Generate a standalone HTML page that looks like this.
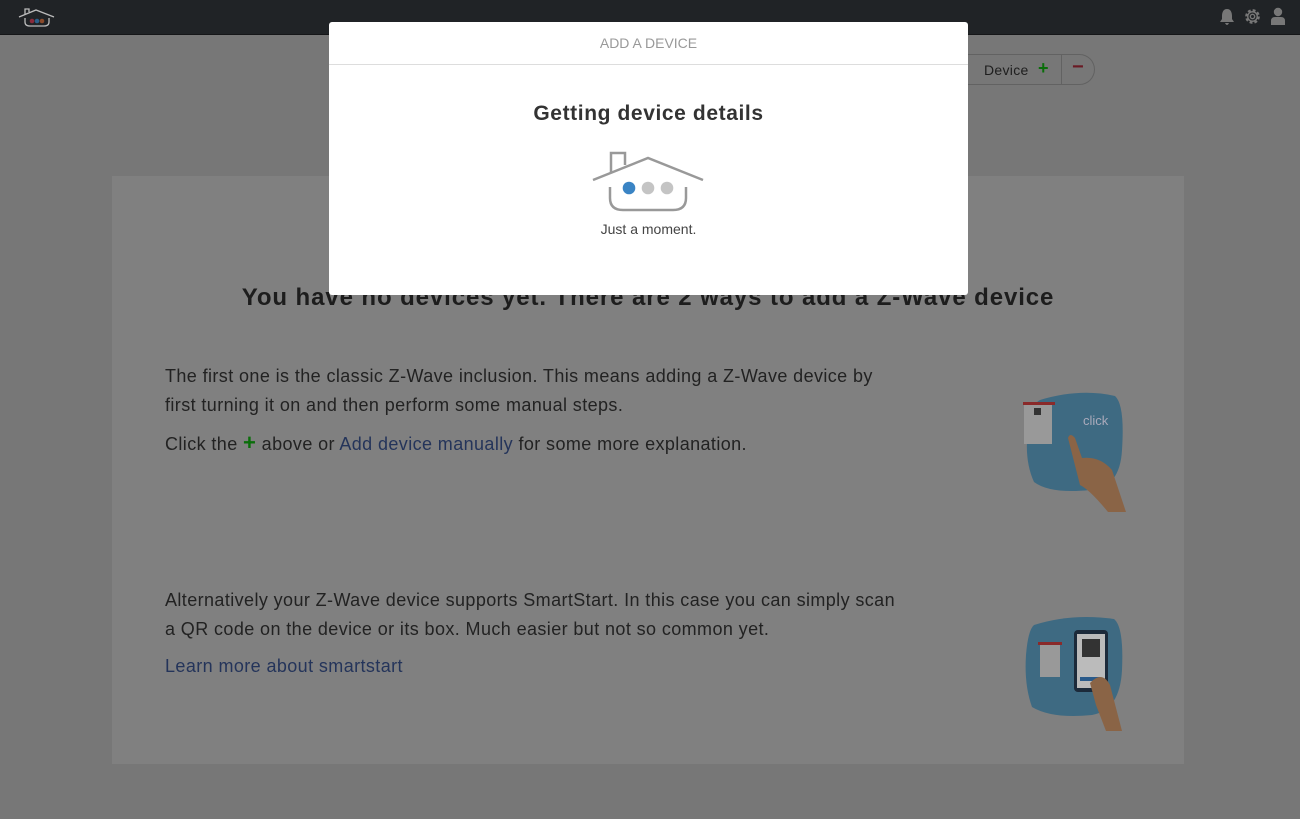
<!DOCTYPE html>
<html><head><meta charset="utf-8"><style>
*{margin:0;padding:0;box-sizing:border-box}
body{width:1300px;height:819px;overflow:hidden;background:#777;font-family:"Liberation Sans","DejaVu Sans",sans-serif;position:relative;color:#222}
.top{position:absolute;left:0;top:0;width:1300px;height:35px;background:#202326;border-bottom:1px solid #151618}
.card{position:absolute;left:112px;top:176px;width:1072px;height:588px;background:#808080}
.tb{position:absolute;left:966px;top:54px;width:129px;height:31px;border:1px solid #626262;border-left:none;border-radius:0 16px 16px 0;font-size:14px;color:#1e1e1e}
.tb .d{position:absolute;left:18px;top:7px;letter-spacing:0.3px}
.tb .sep{position:absolute;left:95px;top:0;width:1px;height:29px;background:#626262}
h1{position:absolute;left:0;width:1296px;top:284px;text-align:center;font-size:24px;font-weight:bold;color:#1d1d1d;letter-spacing:0.9px}
p{position:absolute;left:165px;font-size:18px;color:#222;line-height:29px;letter-spacing:0.4px}
a{color:#24345a;text-decoration:none}
.modal{position:absolute;left:329px;top:22px;width:639px;height:273px;background:#fff;border-radius:3px}
.mh{height:43px;border-bottom:1px solid #ddd;text-align:center;font-size:14px;color:#999;line-height:42px}
.mt{position:absolute;top:80px;width:100%;text-align:center;font-size:21px;font-weight:bold;color:#333;letter-spacing:0.6px}
.mm{position:absolute;top:199px;width:100%;text-align:center;font-size:14px;color:#444}
</style></head><body>
<div class="top">
<svg style="position:absolute;left:16px;top:5px" width="42" height="26" viewBox="0 0 42 26"><path d="M3 12 L20 5 L38 12" fill="none" stroke="#bbb" stroke-width="1.3"/><path d="M9 9 V4 H13 V7" fill="none" stroke="#bbb" stroke-width="1.3"/><path d="M9 13 V17 Q9 21 14 21 H28 Q33 21 33 17 V13" fill="none" stroke="#bbb" stroke-width="1.3"/><circle cx="16" cy="16" r="2.3" fill="#8a2a3a"/><circle cx="21" cy="16" r="2.3" fill="#2a5f8a"/><circle cx="26" cy="16" r="2.3" fill="#8a4a2a"/></svg>
<svg style="position:absolute;left:1219px;top:8px" width="16" height="18" viewBox="0 0 16 18"><path d="M8 1 C4 1 3 5 3 8 V11 L1 14 H15 L13 11 V8 C13 5 12 1 8 1Z M6 15 H10 Q9 17 8 17 Q7 17 6 15Z" fill="#777"/></svg>
<svg style="position:absolute;left:1243px;top:7px" width="19" height="19" viewBox="0 0 20 20"><circle cx="10" cy="10" r="6.5" fill="none" stroke="#777" stroke-width="2.5" stroke-dasharray="3 2.1"/><circle cx="10" cy="10" r="5" fill="none" stroke="#777" stroke-width="1.5"/><circle cx="10" cy="10" r="2.3" fill="none" stroke="#777" stroke-width="1.5"/></svg>
<svg style="position:absolute;left:1270px;top:7px" width="16" height="19" viewBox="0 0 16 19"><circle cx="8" cy="5" r="4.2" fill="#777"/><path d="M1 18 V14 Q1 10 5 10 H11 Q15 10 15 14 V18Z" fill="#777"/></svg>
</div>
<div class="tb"><span class="d">Device</span><span style="position:absolute;left:72px;top:3px;color:#0a6e0a;font-weight:bold;font-size:18px">+</span><div class="sep"></div><span style="position:absolute;left:106px;top:1px;color:#6a1a24;font-weight:bold;font-size:20px">−</span></div>
<div class="card"></div>
<h1>You have no devices yet. There are 2 ways to add a Z-Wave device</h1>
<p style="top:362px;width:725px">The first one is the classic Z-Wave inclusion. This means adding a Z-Wave device by first turning it on and then perform some manual steps.</p>
<p style="top:428px">Click the <b style="color:#0a6e0a;font-size:22px">+</b> above or <a>Add device manually</a> for some more explanation.</p>
<p style="top:586px;width:740px">Alternatively your Z-Wave device supports SmartStart. In this case you can simply scan a QR code on the device or its box. Much easier but not so common yet.</p>
<p style="top:652px"><a>Learn more about smartstart</a></p>
<svg style="position:absolute;left:1020px;top:390px" width="110" height="125" viewBox="0 0 110 125"><path d="M20 10 Q60 -2 95 6 Q105 15 102 60 Q100 98 70 100 Q30 104 14 92 Q4 70 8 40 Q10 15 20 10Z" fill="#3e6a82"/><rect x="4" y="14" width="28" height="40" fill="#999"/><rect x="3" y="12" width="32" height="3" fill="#8a2a2a"/><rect x="14" y="18" width="7" height="7" fill="#333"/><path d="M48 48 Q50 42 55 48 L62 68 Q80 66 92 80 L106 122 H88 Q70 100 60 95Z" fill="#8a6446"/><text x="63" y="35" font-size="13" fill="#aab" font-family="Liberation Sans">click</text></svg>
<svg style="position:absolute;left:1022px;top:615px" width="108" height="118" viewBox="0 0 108 118"><path d="M12 10 Q50 -2 92 4 Q102 12 100 55 Q98 95 70 100 Q30 104 10 92 Q2 70 4 40 Q6 15 12 10Z" fill="#3e6a82"/><rect x="18" y="30" width="20" height="32" fill="#999"/><rect x="16" y="27" width="24" height="3" fill="#8a2a2a"/><rect x="52" y="15" width="34" height="62" rx="4" fill="#1c2a3a"/><rect x="55" y="19" width="28" height="54" fill="#bbb"/><rect x="60" y="24" width="18" height="18" fill="#333"/><rect x="58" y="62" width="20" height="4" fill="#2a5a8a"/><path d="M68 68 Q80 55 88 70 L100 116 H84 L74 90Z" fill="#8a6446"/></svg>
<div class="modal">
<div class="mh">ADD A DEVICE</div>
<div class="mt">Getting device details</div>
<svg style="position:absolute;left:262px;top:128px" width="114" height="64" viewBox="0 0 114 64"><path d="M2 30 L57 8 L112 30" fill="none" stroke="#999" stroke-width="2.5"/><path d="M20 23 V3 H34 V15" fill="none" stroke="#999" stroke-width="2.5"/><path d="M19 37 V48 Q19 60 32 60 H82 Q95 60 95 48 V37" fill="none" stroke="#999" stroke-width="2.5"/><circle cx="38" cy="38" r="6.3" fill="#3a84c4"/><circle cx="57" cy="38" r="6.3" fill="#c4c4c4"/><circle cx="76" cy="38" r="6.3" fill="#c4c4c4"/></svg>
<div class="mm">Just a moment.</div>
</div>
</body></html>
